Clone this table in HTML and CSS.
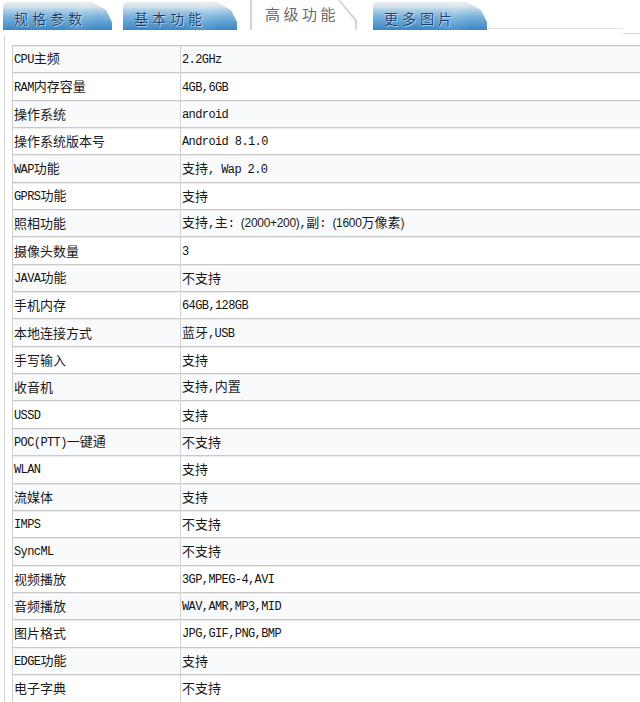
FILE: index.html
```html
<!DOCTYPE html>
<html lang="zh-CN">
<head>
<meta charset="utf-8">
<title>高级功能</title>
<link rel="stylesheet" href="styles.css">
</head>
<body>
<div class="tabs">
  <div class="tab tab-1"><span class="tab-label">规格参数</span></div>
  <div class="tab tab-2"><span class="tab-label">基本功能</span></div>
  <div class="tab-active"><div class="tab-active-inner"><span class="tab-active-label">高级功能</span></div></div>
  <div class="tab tab-4"><span class="tab-label">更多图片</span></div>
  <div class="tab-line"></div>
  <div class="tab-line-end"></div>
</div>
<div class="panel">
  <table class="spec">
    <tr><td class="k"><span class="en">CPU</span>主频</td><td class="v"><span class="en">2.2GHz</span></td></tr>
    <tr><td class="k"><span class="en">RAM</span>内存容量</td><td class="v"><span class="en">4GB,6GB</span></td></tr>
    <tr><td class="k">操作系统</td><td class="v"><span class="en">android</span></td></tr>
    <tr><td class="k">操作系统版本号</td><td class="v"><span class="en">Android 8.1.0</span></td></tr>
    <tr><td class="k"><span class="en">WAP</span>功能</td><td class="v">支持<span class="en">, Wap 2.0</span></td></tr>
    <tr><td class="k"><span class="en">GPRS</span>功能</td><td class="v">支持</td></tr>
    <tr><td class="k">照相功能</td><td class="v">支持<span class="en">,</span>主<span class="en">: </span><span class="pr">(2000+200)</span><span class="en">,</span>副<span class="en">: </span><span class="pr">(1600</span>万像素<span class="pr">)</span></td></tr>
    <tr><td class="k">摄像头数量</td><td class="v"><span class="en">3</span></td></tr>
    <tr><td class="k"><span class="en">JAVA</span>功能</td><td class="v">不支持</td></tr>
    <tr><td class="k">手机内存</td><td class="v"><span class="en">64GB,128GB</span></td></tr>
    <tr><td class="k">本地连接方式</td><td class="v">蓝牙<span class="en">,USB</span></td></tr>
    <tr><td class="k">手写输入</td><td class="v">支持</td></tr>
    <tr><td class="k">收音机</td><td class="v">支持<span class="en">,</span>内置</td></tr>
    <tr><td class="k"><span class="en">USSD</span></td><td class="v">支持</td></tr>
    <tr><td class="k"><span class="en">POC(PTT)</span>一键通</td><td class="v">不支持</td></tr>
    <tr><td class="k"><span class="en">WLAN</span></td><td class="v">支持</td></tr>
    <tr><td class="k">流媒体</td><td class="v">支持</td></tr>
    <tr><td class="k"><span class="en">IMPS</span></td><td class="v">不支持</td></tr>
    <tr><td class="k"><span class="en">SyncML</span></td><td class="v">不支持</td></tr>
    <tr><td class="k">视频播放</td><td class="v"><span class="en">3GP,MPEG-4,AVI</span></td></tr>
    <tr><td class="k">音频播放</td><td class="v"><span class="en">WAV,AMR,MP3,MID</span></td></tr>
    <tr><td class="k">图片格式</td><td class="v"><span class="en">JPG,GIF,PNG,BMP</span></td></tr>
    <tr><td class="k"><span class="en">EDGE</span>功能</td><td class="v">支持</td></tr>
    <tr><td class="k">电子字典</td><td class="v">不支持</td></tr>
  </table>
</div>
</body>
</html>
```
FILE: styles.css
```css
html, body {
  margin: 0;
  padding: 0;
  background: #ffffff;
}
body {
  width: 640px;
  height: 702px;
  overflow: hidden;
  font-family: "Noto Sans CJK SC", "Noto Sans", sans-serif;
  color: #1a1a1a;
}

/* ---------- tabs ---------- */
.tabs {
  display: flex;
  align-items: flex-end;
  height: 30px;
  padding-left: 3px;
}
.tab {
  height: 28px;
  box-sizing: border-box;
  padding: 5px 0 0 11px;
  clip-path: polygon(0 3px, 3px 0, calc(100% - 20px) 0, calc(100% - 6px) 8px, 100% 20px, 100% 100%, 0 100%);
  background:
    linear-gradient(100deg, rgba(255,255,255,0) 55%, rgba(255,255,255,0.12) 70%, rgba(255,255,255,0) 85%),
    linear-gradient(180deg, #e6ecf0 0%, #d6e3eb 16%, #a6cbe4 32%, #7bb3dc 52%, #5b9fd2 74%, #3d86c5 100%);
}
.tab-1 { width: 109px; }
.tab-2 { width: 114px; margin-left: 11px; }
.tab-4 { width: 114px; margin-left: 16px; }
.tab-label {
  display: block;
  font-size: 14px;
  line-height: 22px;
  letter-spacing: 4px;
  color: #163f70;
  text-shadow: 0 0 1px #e8f2fa, 1px 1px 0 rgba(255,255,255,0.45);
}
.tab-active {
  width: 107px;
  height: 30px;
  margin-left: 13px;
  background: #d4d4d4;
  clip-path: polygon(0 0, calc(100% - 17px) 0, 100% 20px, 100% 100%, 0 100%);
}
.tab-active-inner {
  height: 30px;
  margin: 0 2px 0 2px;
  box-sizing: border-box;
  padding: 4px 0 0 13px;
  background: #ffffff;
  clip-path: polygon(0 0, calc(100% - 17px) 0, 100% 21px, 100% 100%, 0 100%);
}
.tab-active-label {
  display: block;
  font-size: 15px;
  line-height: 20px;
  letter-spacing: 3.5px;
  color: #6a6a6a;
}
.tab-line {
  width: 136px;
  height: 1px;
  margin-bottom: 1px;
  background: #dedede;
}
.tab-line-end {
  flex: 1;
  height: 1px;
  margin-bottom: -4px;
  background: #d8d8d8;
}

/* ---------- panel & table ---------- */
.panel {
  margin: 6px 0 0 4px;
  border-left: 1px solid #d3d3d3;
  padding: 9px 0 0 7px;
  height: 700px;
}
.spec {
  border-collapse: collapse;
  width: 660px;
  table-layout: fixed;
  border-left: 1px solid #cfcfcf;
}
.spec tr:nth-child(odd) td { background: #f9fafc; }
.spec tr:nth-child(even) td { background: #ffffff; }
.spec td {
  height: 27.35px;
  padding: 0 0 0 1px;
  box-sizing: border-box;
  border-top: 1px solid #c9c9c9;
  box-shadow: inset 0 1px 0 #ebebeb;
  font-size: 13px;
  line-height: 16px;
  white-space: nowrap;
  vertical-align: middle;
}
.spec td.k {
  width: 168px;
}
.spec td.v {
  border-left: 1px solid #d4d4d4;
  padding-left: 1px;
}
.en {
  font-family: "Liberation Mono", "DejaVu Sans Mono", monospace;
  font-size: 12px;
  letter-spacing: -0.6px;
  color: #111111;
}
.pr {
  font-family: "Liberation Sans", "Noto Sans", sans-serif;
  font-size: 12px;
  letter-spacing: -0.3px;
}
```
